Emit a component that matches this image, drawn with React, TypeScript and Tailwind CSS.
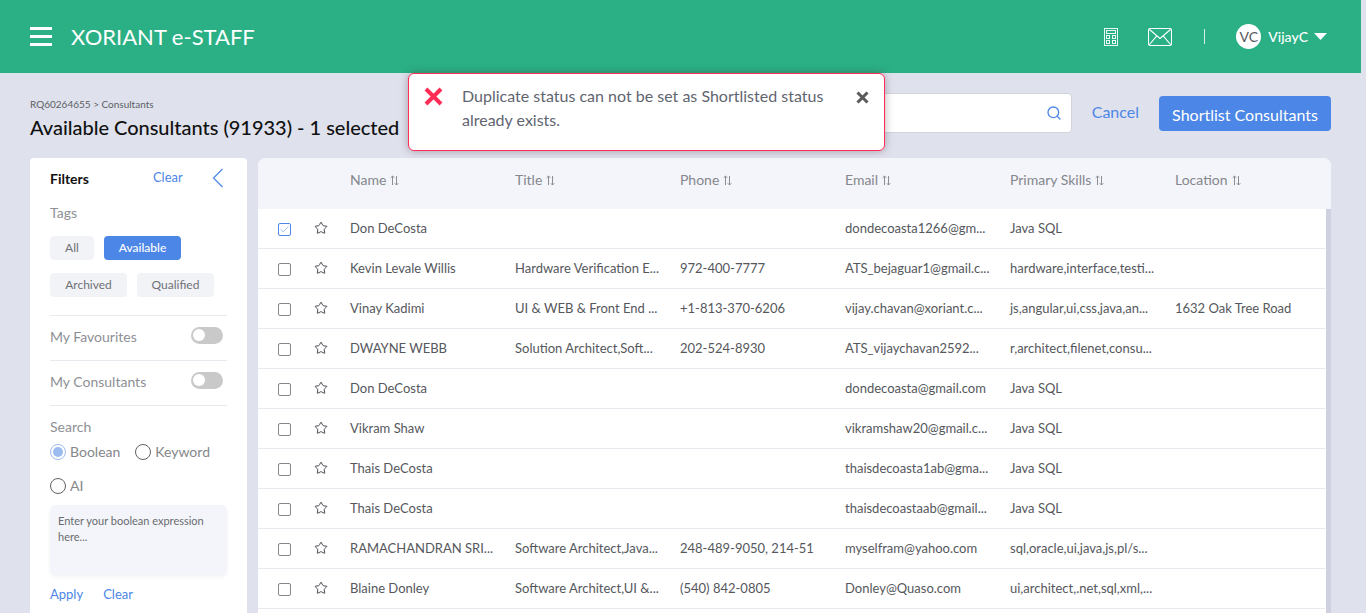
import React from "react";
import { Star, Search, Check } from "lucide-react";

const rows = [
  { n: "Don DeCosta", t: "", p: "", e: "dondecoasta1266@gm...", s: "Java SQL", l: "", c: true },
  { n: "Kevin Levale Willis", t: "Hardware Verification E...", p: "972-400-7777", e: "ATS_bejaguar1@gmail.c...", s: "hardware,interface,testi...", l: "" },
  { n: "Vinay Kadimi", t: "UI & WEB & Front End ...", p: "+1-813-370-6206", e: "vijay.chavan@xoriant.c...", s: "js,angular,ui,css,java,an...", l: "1632 Oak Tree Road" },
  { n: "DWAYNE WEBB", t: "Solution Architect,Soft...", p: "202-524-8930", e: "ATS_vijaychavan2592...", s: "r,architect,filenet,consu...", l: "" },
  { n: "Don DeCosta", t: "", p: "", e: "dondecoasta@gmail.com", s: "Java SQL", l: "" },
  { n: "Vikram Shaw", t: "", p: "", e: "vikramshaw20@gmail.c...", s: "Java SQL", l: "" },
  { n: "Thais DeCosta", t: "", p: "", e: "thaisdecoasta1ab@gma...", s: "Java SQL", l: "" },
  { n: "Thais DeCosta", t: "", p: "", e: "thaisdecoastaab@gmail...", s: "Java SQL", l: "" },
  { n: "RAMACHANDRAN SRI...", t: "Software Architect,Java...", p: "248-489-9050, 214-51", e: "myselfram@yahoo.com", s: "sql,oracle,ui,java,js,pl/s...", l: "" },
  { n: "Blaine Donley", t: "Software Architect,UI &...", p: "(540) 842-0805", e: "Donley@Quaso.com", s: "ui,architect,.net,sql,xml,...", l: "" },
];

function SortIcon() {
  return (
    <svg width="9" height="11" viewBox="0 0 9 11" className="ml-1 mt-px" fill="none" stroke="#8b8d93" strokeWidth="1">
      <path d="M2.5 10V1M0.7 2.8 2.5 1l1.8 1.8" />
      <path d="M6.5 1v9M4.7 8.2 6.5 10l1.8-1.8" />
    </svg>
  );
}

function HeadCell({ label, w }: { label: string; w: string }) {
  return (
    <div className={`flex items-center text-[14px] text-[#85878c] ${w}`}>
      {label}
      <SortIcon />
    </div>
  );
}

function Toggle() {
  return (
    <div className="flex h-[17px] w-[32px] items-center rounded-full bg-[#c9c9c9] pl-[2px]">
      <div className="h-[12px] w-[12px] rounded-full bg-white" />
    </div>
  );
}

function Pill({ label, active, w }: { label: string; active?: boolean; w: string }) {
  return (
    <div className={`flex h-[24px] items-center justify-center rounded-[4px] text-[12px] ${w} ${active ? "bg-[#4c86e6] text-white font-medium" : "bg-[#f2f3f6] text-[#6f7176]"}`}>
      {label}
    </div>
  );
}

function Radio({ label, on }: { label: string; on?: boolean }) {
  return (
    <div className="flex items-center gap-[4px] text-[14px] text-[#85878b]">
      {on ? (
        <div className="flex h-[16px] w-[16px] items-center justify-center rounded-full border border-[#9cbcf0]">
          <div className="h-[10px] w-[10px] rounded-full bg-[#9cbcf0]" />
        </div>
      ) : (
        <div className="h-[16px] w-[16px] rounded-full border border-[#5f6165]" />
      )}
      {label}
    </div>
  );
}

function Divider() {
  return <div className="h-px bg-[#e9eaf0]" />;
}

export default function App() {
  return (
    <div className="relative flex h-[613px] w-[1366px] overflow-hidden bg-[#dfe2ed] font-['Lato',sans-serif]">
      <div className="flex w-[1361px] flex-col">
        <header className="flex h-[73px] shrink-0 items-center bg-[#2ab084] pl-[30px] pr-[34px] text-white">
          <div className="flex h-[19px] w-[22px] flex-col justify-between">
            <div className="h-[3px] bg-white" />
            <div className="h-[3px] bg-white" />
            <div className="h-[3px] bg-white" />
          </div>
          <div className="ml-[19px] text-[22px] font-normal">XORIANT e-STAFF</div>
          <div className="flex-1" />
          <svg width="14" height="18" viewBox="0 0 14 18" fill="none" stroke="white" strokeWidth="1" opacity="0.9">
            <rect x="0.5" y="0.5" width="13" height="17" />
            <rect x="2.5" y="2.5" width="9" height="3" />
            <rect x="2.5" y="7.5" width="3" height="3" />
            <rect x="8.5" y="7.5" width="3" height="3" />
            <rect x="2.5" y="12.5" width="3" height="3" />
            <rect x="8.5" y="12.5" width="3" height="3" />
          </svg>
          <svg width="24" height="18" viewBox="0 0 24 18" fill="none" stroke="white" strokeWidth="1.1" className="ml-[30px]">
            <rect x="0.5" y="0.5" width="23" height="17" rx="2" />
            <path d="M1.5 1.5 12 10.5 22.5 1.5M1.5 16.5 8.8 7.8M22.5 16.5 15.2 7.8" />
          </svg>
          <div className="ml-[32px] h-[15px] w-px bg-white opacity-80" />
          <div className="ml-[31px] flex h-[25px] w-[25px] items-center justify-center rounded-full bg-white text-[14px] text-[#55585c]">VC</div>
          <div className="ml-[7px] text-[14px] font-medium">VijayC</div>
          <svg width="13" height="7" viewBox="0 0 13 7" className="ml-[6px]" fill="white"><path d="M0 0h13L6.5 7z" /></svg>
        </header>

        <div className="flex flex-1 flex-col pl-[30px] pr-[30px]">
          <div className="flex h-[85px] shrink-0 items-start">
            <div className="pt-[25px]">
              <div className="text-[10px] leading-[12px] text-[#5c5e63]">RQ60264655 &gt; Consultants</div>
              <div className="mt-[4px] text-[20px] leading-[26px] font-medium text-[#111] tracking-[-0.02px]">Available Consultants (91933) - 1 selected</div>
            </div>
            <div className="flex-1" />
            <div className="mt-[20px] flex h-[40px] w-[300px] items-center justify-end rounded-[4px] border border-[#d3d5dd] bg-white pr-[9px]">
              <Search size={16} color="#4c86e6" />
            </div>
            <div className="ml-[20px] mt-[29px] text-[16px] leading-[20px] text-[#4c86e6]">Cancel</div>
            <div className="ml-[20px] mt-[23px] flex h-[35px] w-[172px] items-center justify-center rounded-[4px] bg-[#4c86e6] pt-[2px] text-[16px] text-white">Shortlist Consultants</div>
          </div>

          <div className="flex min-h-0 flex-1 gap-[11px]">
            <aside className="w-[217px] shrink-0 rounded-t-[4px] bg-white px-[20px]">
              <div className="flex h-[42px] items-center pb-[2px]">
                <div className="text-[14px] font-bold text-[#111]">Filters</div>
                <div className="ml-[64px] text-[13px] text-[#4c86e6]">Clear</div>
                <svg width="12" height="20" viewBox="0 0 12 20" fill="none" stroke="#4c86e6" strokeWidth="1.2" className="ml-[29px]"><path d="M10.5 1 1.5 10l9 9" /></svg>
              </div>
              <div className="mt-[4px] text-[14px] leading-[18px] text-[#8e9095]">Tags</div>
              <div className="mt-[14px] flex flex-wrap gap-x-[10px] gap-y-[13px]">
                <Pill label="All" w="w-[44px]" />
                <Pill label="Available" active w="w-[77px]" />
                <Pill label="Archived" w="w-[77px]" />
                <Pill label="Qualified" w="w-[77px]" />
              </div>
              <div className="mt-[18px]"><Divider /></div>
              <div className="flex h-[44px] items-center justify-between pb-[4px] pr-[4px]">
                <div className="text-[14px] text-[#8e9095]">My Favourites</div>
                <div className="-mt-[2px]"><Toggle /></div>
              </div>
              <Divider />
              <div className="flex h-[44px] items-center justify-between pb-[4px] pr-[4px]">
                <div className="text-[14px] text-[#8e9095]">My Consultants</div>
                <div className="-mt-[2px]"><Toggle /></div>
              </div>
              <Divider />
              <div className="mt-[12px] text-[14px] leading-[18px] text-[#8e9095]">Search</div>
              <div className="mt-[5px] flex gap-[15px]">
                <Radio label="Boolean" on />
                <Radio label="Keyword" />
              </div>
              <div className="mt-[13px]"><Radio label="AI" /></div>
              <div className="mt-[9px] h-[70px] rounded-[6px] bg-[#f3f5fa] px-[8px] py-[8px] text-[11px] leading-[16px] text-[#6a6c70] shadow-[0_2px_4px_rgba(0,0,0,0.05)]">
                Enter your boolean expression here...
              </div>
              <div className="mt-[10px] flex gap-[20px] text-[13px] leading-[18px] text-[#4c86e6]">
                <span>Apply</span>
                <span>Clear</span>
              </div>
            </aside>

            <main className="relative min-w-0 flex-1 overflow-hidden rounded-t-[8px] bg-white">
              <div className="flex h-[51px] items-center bg-[#f3f5fa] pb-[8px] pl-[92px]">
                <HeadCell label="Name" w="w-[165px]" />
                <HeadCell label="Title" w="w-[165px]" />
                <HeadCell label="Phone" w="w-[165px]" />
                <HeadCell label="Email" w="w-[165px]" />
                <HeadCell label="Primary Skills" w="w-[165px]" />
                <HeadCell label="Location" w="w-[156px]" />
              </div>
              <div className="pr-[6px]">
                {rows.map((r, i) => (
                  <div key={i} className="flex h-[40px] items-center border-b border-[#e9eaf0] text-[13px] text-[#55575c]">
                    <div className="ml-[20px] w-[36px] pt-[1px]">
                      {r.c ? (
                        <div className="flex h-[13px] w-[13px] items-center justify-center rounded-[2px] border border-[#4c86e6]">
                          <Check size={11} color="#4c86e6" strokeWidth={1.2} />
                        </div>
                      ) : (
                        <div className="h-[13px] w-[13px] rounded-[2px] border border-[#85878c]" />
                      )}
                    </div>
                    <div className="w-[36px]">
                      <Star size={14} color="#3a3d45" strokeWidth={1.6} className="-mt-[2px]" />
                    </div>
                    <div className="w-[165px] whitespace-nowrap">{r.n}</div>
                    <div className="w-[165px] whitespace-nowrap">{r.t}</div>
                    <div className="w-[165px] whitespace-nowrap">{r.p}</div>
                    <div className="w-[165px] whitespace-nowrap">{r.e}</div>
                    <div className="w-[165px] whitespace-nowrap">{r.s}</div>
                    <div className="whitespace-nowrap">{r.l}</div>
                  </div>
                ))}
              </div>
              <div className="absolute right-0 top-[51px] bottom-0 w-[5px] bg-[#cfd1e0]" />
            </main>
          </div>
        </div>
      </div>

      <div className="absolute left-[408px] top-[73px] flex h-[78px] w-[477px] items-start rounded-[6px] border border-[#ff2d55] bg-white pl-[15px] pr-[14px] shadow-[0_0_8px_rgba(80,40,60,0.4)]">
        <svg width="19" height="19" viewBox="0 0 19 19" className="mt-[13px]" fill="none" stroke="#ff2d55" strokeWidth="4"><path d="M2 2l15 15M17 2 2 17" /></svg>
        <div className="ml-[19px] mt-[10px] w-[385px] text-[16px] leading-[24px] text-[#5f6570]">Duplicate status can not be set as Shortlisted status already exists.</div>
        <svg width="13" height="13" viewBox="0 0 13 13" className="ml-[9px] mt-[17px]" fill="none" stroke="#5a5a5a" strokeWidth="3"><path d="M1.5 1.5l10 10M11.5 1.5l-10 10" /></svg>
      </div>
    </div>
  );
}
